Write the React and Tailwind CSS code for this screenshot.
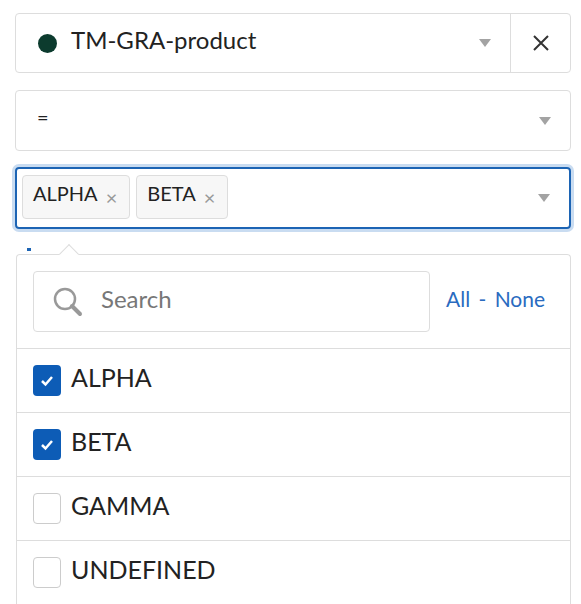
export default function App() {
  const Arrow = () => (
    <svg width="14" height="10" viewBox="0 0 14 10"><path d="M1 1h12L7 9z" fill="#a3a3a3" /></svg>
  );
  const items = [["ALPHA", true], ["BETA", true], ["GAMMA", false], ["UNDEFINED", false]];
  return (
    <div className="w-[581px] h-[604px] bg-white overflow-hidden text-[#222]" style={{ fontFamily: "Lato, 'Open Sans', sans-serif" }}>
      <div className="pl-[15px] pr-[10px] pt-[13px] flex flex-col">
        <div className="h-[60px] border border-[#ddd] rounded flex items-center">
          <div className="flex-1 flex items-center pl-[22px] pr-[18px]">
            <span className="w-[19px] h-[19px] rounded-full bg-[#0c3b2e] mr-[14px]" />
            <span className="text-[24px] flex-1 -mt-[7px]">TM-GRA-product</span>
            <Arrow />
          </div>
          <div className="w-[60px] h-full border-l border-[#ddd] flex items-center justify-center">
            <svg width="20" height="20" viewBox="0 0 20 20"><path d="M3 3l14 14M17 3L3 17" stroke="#333" strokeWidth="2" /></svg>
          </div>
        </div>
        <div className="mt-[17px] h-[61px] border border-[#ddd] rounded flex items-center pl-[21px] pr-[18px]">
          <span className="text-[20px] flex-1 -mt-[8px]">=</span>
          <Arrow />
        </div>
        <div className="mt-[16px] h-[62px] border-2 border-[#1c64b4] rounded ring-[3px] ring-[#c9dcf1] flex items-center pl-[5px] pr-[18px] gap-[6px]">
          {["ALPHA", "BETA"].map(t => (
            <span key={t} className="h-[44px] pl-[10px] pr-[12px] border border-[#ddd] rounded bg-[#f7f7f7] flex items-center gap-[8px] text-[20px] -mt-[2px]">
              <span className="-mt-[8px]">{t}</span><span className="text-[#999] text-[20px]">×</span>
            </span>
          ))}
          <span className="flex-1" />
          <Arrow />
        </div>
        <div className="relative mt-[25px] border border-[#ddd] border-b-0 rounded-t ml-[1px] h-[360px]">
          <div className="absolute -top-[8px] left-[45px] w-[14px] h-[14px] bg-white border-l border-t border-[#ddd] rotate-45" />
          <div className="absolute -top-[7px] left-[10px] w-[4px] h-[3px] bg-[#1c64b4]" />
          <div className="h-[94px] flex items-center pl-[16px] pr-[16px] border-b border-[#ddd]">
            <div className="w-[397px] h-[61px] border border-[#ddd] rounded flex items-center pl-[17px]">
              <svg width="34" height="34" viewBox="0 0 34 34"><circle cx="14" cy="14" r="10" stroke="#999" strokeWidth="2.5" fill="none" /><path d="M21 21l8 8" stroke="#999" strokeWidth="4" strokeLinecap="round" /></svg>
              <span className="ml-[16px] text-[24px] text-[#777] -mt-[6px]">Search</span>
            </div>
            <div className="ml-[16px] text-[21px] text-[#2a6bbf] -mt-[6px]">All <span className="mx-[3px]">-</span> None</div>
          </div>
          {items.map(([t, c]) => (
            <div key={t} className="h-[64px] border-b border-[#ddd] flex items-center pl-[16px] gap-[10px]">
              {c ? (
                <span className="w-[28px] h-[31px] rounded bg-[#0d5cb6] flex items-center justify-center">
                  <svg width="14" height="12" viewBox="0 0 14 12"><path d="M2 6l3.5 3.5L12 2" stroke="white" strokeWidth="2.5" fill="none" /></svg>
                </span>
              ) : (
                <span className="w-[28px] h-[31px] rounded border border-[#ccc] bg-white" />
              )}
              <span className="text-[25px] -mt-[6px]">{t}</span>
            </div>
          ))}
        </div>
      </div>
    </div>
  );
}
